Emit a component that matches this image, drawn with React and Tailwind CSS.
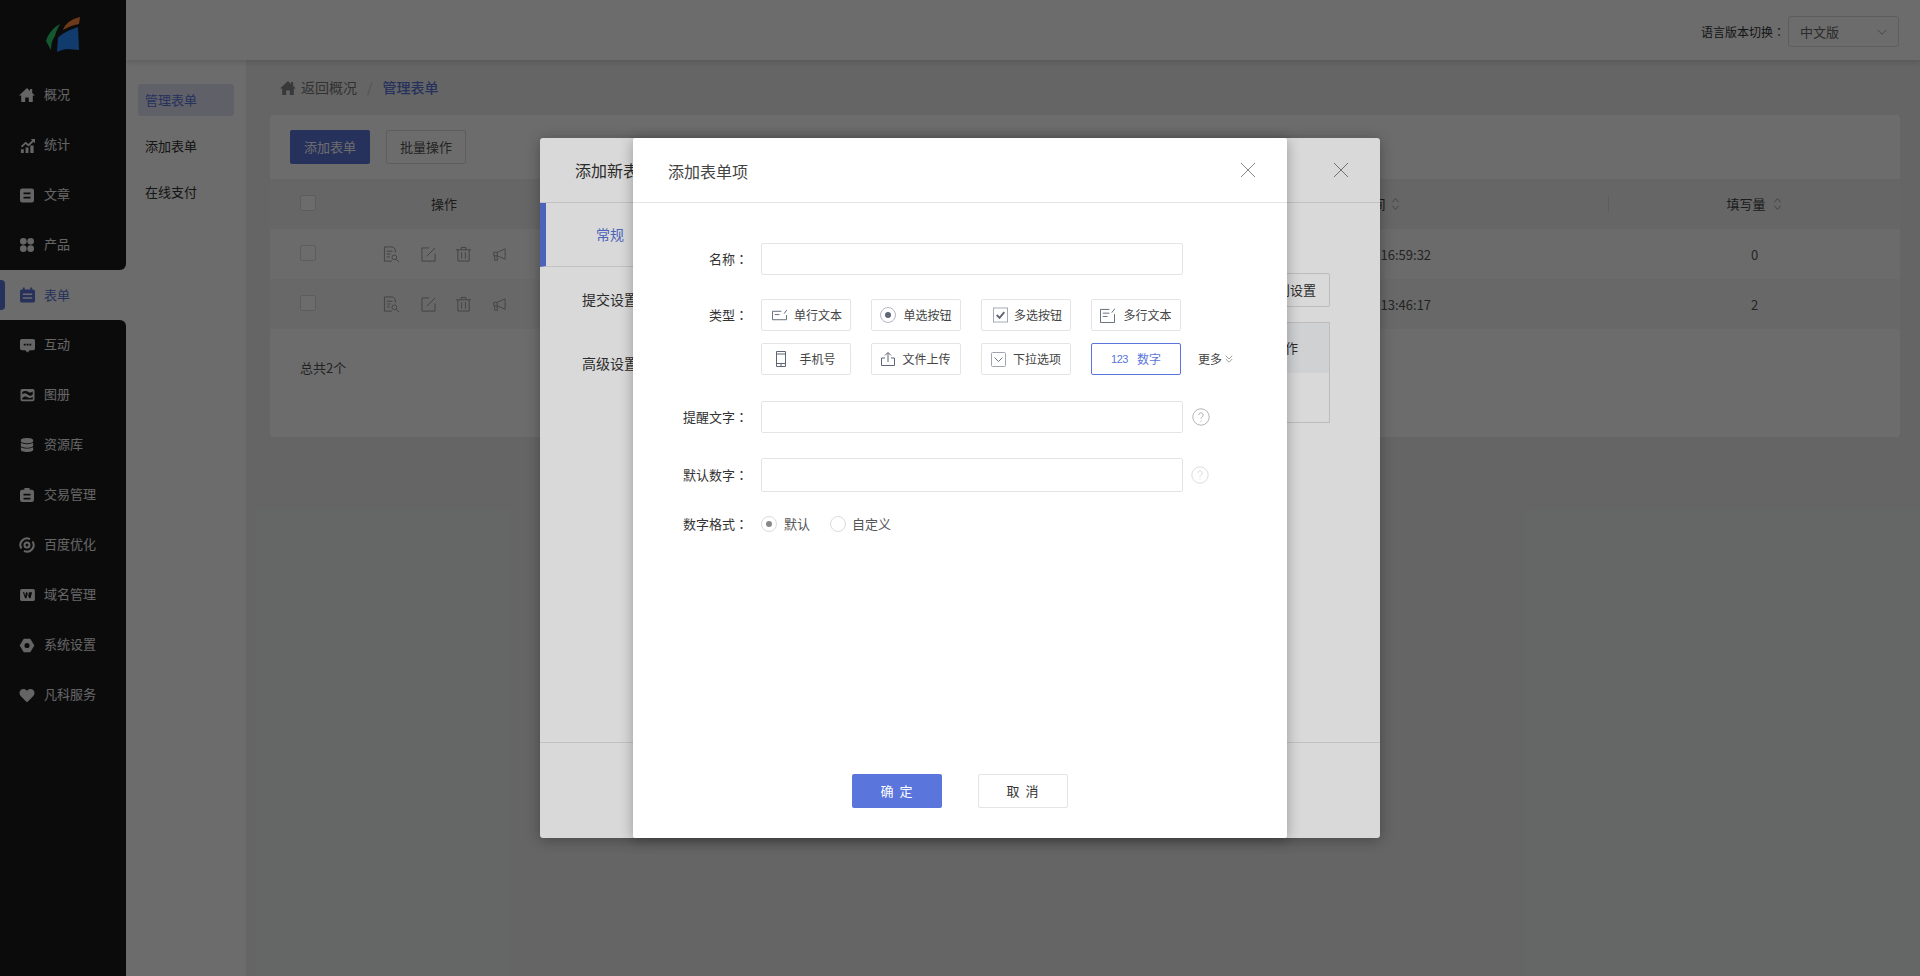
import React from 'react'
import { FaDatabase, FaHeart } from 'react-icons/fa'

const font = { fontFamily: '"Noto Sans CJK SC", "Liberation Sans", sans-serif' }

const Svg = ({ className, children, box = '0 0 16 16' }) => (
    <svg viewBox={box} className={className} fill="currentColor">{children}</svg>
)

const Line = ({ className, children, box = '0 0 16 16' }) => (
    <svg viewBox={box} className={className} fill="none" stroke="currentColor" strokeWidth="1">{children}</svg>
)

const HomeIcon = ({ className }) => (
    <Svg className={className}>
        <path d="M8 1 0 8.500h2.200V15h4v-4.500h3.600V15h4V8.500H16L13.200 5.900V2h-2.200v1.900Z" />
    </Svg>
)

const navTop = [
    { label: '概况', icon: <HomeIcon className="w-[16px] h-[16px]" /> },
    {
        label: '统计', icon: (
            <Svg className="w-[15px] h-[15px]">
                <path d="M1 12h3v4H1zM6 10h3v6H6zM11 8h3.500v8H11z" />
                <path d="M1 8.500 6 4l3 2.500L13 2.500l-1.500-1.500H16v4.500l-1.500-1.500-5.400 5L6 6.500 2.200 10z" />
            </Svg>
        )
    },
    {
        label: '文章', icon: (
            <Svg className="w-[14px] h-[15px]">
                <path fillRule="evenodd" d="M2.500 0h11A2.500 2.500 0 0 1 16 2.500v11a2.500 2.500 0 0 1-2.500 2.500h-11A2.500 2.500 0 0 1 0 13.500v-11A2.500 2.500 0 0 1 2.500 0ZM4 4.500V6.500h8V4.500ZM4 9.500v2h8v-2Z" />
            </Svg>
        )
    },
    {
        label: '产品', icon: (
            <Svg className="w-[14px] h-[14px]">
                <circle cx="3.800" cy="3.800" r="3.800" />
                <circle cx="12.200" cy="3.800" r="3.800" />
                <circle cx="3.800" cy="12.200" r="3.800" />
                <circle cx="12.200" cy="12.200" r="3.800" />
            </Svg>
        )
    },
]

const formIcon = (
    <Svg className="w-[15px] h-[16px]">
        <path fillRule="evenodd" d="M3 0h2v2h6V0h2v2h1a2 2 0 0 1 2 2v10a2 2 0 0 1-2 2H2a2 2 0 0 1-2-2V4a2 2 0 0 1 2-2h1Zm0 6.500v1.500h10V6.500Zm0 4v1.500h10v-1.500Z" />
    </Svg>
)

const navBottom = [
    {
        label: '互动', icon: (
            <Svg className="w-[15px] h-[15px]">
                <path fillRule="evenodd" d="M2 1h12a2 2 0 0 1 2 2v8a2 2 0 0 1-2 2h-3.500L8 15.500 5.500 13H2a2 2 0 0 1-2-2V3a2 2 0 0 1 2-2Zm2 5v2h2V6Zm3 0v2h2V6Zm3 0v2h2V6Z" />
            </Svg>
        )
    },
    {
        label: '图册', icon: (
            <Svg className="w-[15px] h-[14px]">
                <path fillRule="evenodd" d="M2 1h12a2 2 0 0 1 2 2v10a2 2 0 0 1-2 2H2a2 2 0 0 1-2-2V3a2 2 0 0 1 2-2Zm0 6.500c3-3 5-1 7 .5s3 1 5-.5V4c-2 1.500-3.500 1.500-5 .5S4 3 2 4.500Zm0 4V13h12v-3c-2 1.500-4 2-6 .5s-4-1-6 1Z" />
            </Svg>
        )
    },
    { label: '资源库', icon: <FaDatabase className="w-[14px] h-[14px]" /> },
    {
        label: '交易管理', icon: (
            <Svg className="w-[14px] h-[16px]">
                <path fillRule="evenodd" d="M5 0h6v2h2.500A2.500 2.500 0 0 1 16 4.500v9a2.500 2.500 0 0 1-2.500 2.500h-11A2.500 2.500 0 0 1 0 13.500v-9A2.500 2.500 0 0 1 2.500 2H5Zm-1 6.500V8.500h8V6.500Zm0 4.500v2h8v-2Z" />
            </Svg>
        )
    },
    {
        label: '百度优化', icon: (
            <Line className="w-[16px] h-[16px]">
                <path strokeWidth="2" d="M2.500 11.500A6.500 6.500 0 0 1 11 2.200M13.500 4.500a6.500 6.500 0 0 1-8.500 9.300" />
                <circle cx="8" cy="8" r="2.500" strokeWidth="2" />
            </Line>
        )
    },
    {
        label: '域名管理', icon: (
            <Svg className="w-[15px] h-[12px]" box="0 0 16 13">
                <rect width="16" height="13" rx="2" />
                <path fill="#1c1d1f" d="M3 3.500h1.500l.9 4 1-4h1.300l1 4 .9-4H13l-1.700 6.500H9.800L8 5.800 7 10H5.300Z" />
            </Svg>
        )
    },
    {
        label: '系统设置', icon: (
            <svg viewBox="0 0 16 16" className="w-[16px] h-[15px]" fill="currentColor" stroke="currentColor" strokeWidth="1.500" strokeLinejoin="round">
                <path fillRule="evenodd" d="M5 1.500h6L15 8l-4 6.500H5L1 8ZM8 4.500a3.500 3.500 0 1 0 0 7 3.500 3.500 0 0 0 0-7Z" />
            </svg>
        )
    },
    { label: '凡科服务', icon: <FaHeart className="w-[16px] h-[15px]" /> },
]

const NavItem = ({ item }) => (
    <div className="h-[50px] flex items-center text-[#eeeeee] text-[13px]">
        <span className="w-[44px] flex justify-center pl-[10px]">{item.icon}</span>
        <span className="-mt-[2px]">{item.label}</span>
    </div>
)

const Sidebar = () => (
    <aside className="w-[126px] shrink-0 h-full flex flex-col bg-white">
        <div className="bg-[#1c1d1f] rounded-br-md">
            <div className="h-[70px] flex justify-center items-start pt-[10px]">
                <svg viewBox="0 0 54 50" className="w-[54px] h-[50px]">
                    <path fill="#30d070" d="M24 14C17 18 12 24 10 31l5 9c0-6 1-10 4-14 1-5 3-8 5-12Z" />
                    <path fill="#ff8a3c" d="M27 20c2-6 8-11 17-13l-1 7c-6 1-11 3-16 6Z" />
                    <path fill="#2a8cff" d="M21 42l1-14c3-4 11-8 20-11l1 23c-4 0-8-1-11-1s-7 1-11 3Z" />
                </svg>
            </div>
            <div className="pt-0">
                {navTop.map(item => <NavItem key={item.label} item={item} />)}
            </div>
        </div>
        <div className="relative h-[50px] flex items-center text-[#5a75db] text-[13px]">
            <span className="absolute left-0 top-[10px] w-[5px] h-[30px] bg-[#5a75db] rounded-r-[4px]" />
            <span className="w-[44px] flex justify-center pl-[10px]">{formIcon}</span>
            <span>表单</span>
        </div>
        <div className="flex-1 bg-[#1c1d1f] rounded-tr-md">
            {navBottom.map(item => <NavItem key={item.label} item={item} />)}
        </div>
    </aside>
)

const SubNav = () => (
    <div className="w-[120px] shrink-0 bg-white px-[12px] pt-[24px] flex flex-col gap-[14px] text-[13px] text-[#333333]">
        <div className="h-[32px] rounded-[3px] bg-[#e3e7f6] text-[#5a75db] flex items-center pl-[7px]">管理表单</div>
        <div className="h-[32px] flex items-center pl-[7px] pb-[1px]">添加表单</div>
        <div className="h-[32px] flex items-center pl-[7px]">在线支付</div>
    </div>
)

const Topbar = () => (
    <header className="h-[60px] shrink-0 bg-white flex items-center justify-end pr-[21px] pt-[3px] shadow-[0_2px_6px_rgba(0,0,0,0.15)] relative z-10">
        <span className="text-[12px] text-[#333333] mr-[3px]">语言版本切换<Colon /></span>
        <div className="w-[111px] h-[31px] border border-[#dddddd] rounded-[3px] flex items-center justify-between pl-[11px] pr-[10px] text-[13px] text-[#666666]">
            <span>中文版</span>
            <Line className="w-[12px] h-[12px] text-[#888888]"><path d="M2 5l6 6 6-6" /></Line>
        </div>
    </header>
)

// the colon sits in the middle of its box in the picture, as in the TC cut
const Colon = () => <span className="[font-family:'Noto_Sans_CJK_TC',sans-serif]">：</span>

const Check = () => <span className="block w-[16px] h-[16px] border border-[#dddddd] rounded-[2px] bg-white -mt-[2px]" />

const SortIcon = () => (
    <Line box="0 0 10 16" className="w-[9px] h-[16px] text-[#999999]">
        <path d="M1.500 6 5 2l3.500 4M1.500 10 5 14l3.500-4" />
    </Line>
)

const rowIcons = (
    <div className="flex items-center text-[#999999]">
        <Line box="0 0 18 18" className="w-[17px] h-[17px] mr-[21px]">
            <path d="M13 7V3.500L10.500 1H1.500v15h8M4 5.500h6M4 8.500h4M4 11.500h3" />
            <circle cx="12" cy="12" r="2.500" />
            <path d="M14 14l3 3" />
        </Line>
        <Line className="w-[15px] h-[15px] mr-[20px]">
            <path d="M8.500 1H1v14h14V7M15 1 6 10" />
        </Line>
        <Line className="w-[15px] h-[16px] mr-[21px]">
            <path d="M0 3.500h16M5.500 3.500V1h5v2.500M2 3.500V15.500h12v-12M6 6v7M10 6v7" />
        </Line>
        <Line className="w-[14px] h-[15px]">
            <path d="M15 1.500v12L6 9.500H2V5.500H6ZM6 5.500v4M3 9.500V14.500h3.500l-1-5" />
        </Line>
    </div>
)

const Row = ({ bg, time, count }) => (
    <div className={`grid grid-cols-[70px_208px_577px_484px_1fr] h-[50px] items-center text-[13px] text-[#555555] ${bg}`}>
        <div className="pl-[30px]"><Check /></div>
        <div className="flex justify-center">{rowIcons}</div>
        <div />
        <div className="text-center pl-[8px] pt-[2px]">{time}</div>
        <div className="text-center pt-[2px]">{count}</div>
    </div>
)

const Page = () => (
    <div className="flex-1 min-w-0 flex flex-col bg-[#eeeff1]">
        <Topbar />
        <div className="flex-1 flex min-h-0">
            <SubNav />
            <main className="flex-1 min-w-0 pl-[24px] pr-[20px]">
                <div className="h-[55px] flex items-center pl-[10px] text-[14px]">
                    <HomeIcon className="w-[16px] h-[16px] text-[#888888] mr-[5px]" />
                    <span className="text-[#777777]">返回概况</span>
                    <span className="text-[#c0c4cc] mx-[10px]">/</span>
                    <span className="text-[#5a75db] font-medium">管理表单</span>
                </div>
                <div className="bg-white rounded-[4px] h-[322px]">
                    <div className="h-[64px] flex items-center pl-[20px] gap-[16px] text-[13px]">
                        <div className="w-[80px] h-[34px] bg-[#5a75db] text-white rounded-[2px] flex items-center justify-center">添加表单</div>
                        <div className="w-[80px] h-[34px] border border-[#dddddd] text-[#555555] rounded-[2px] flex items-center justify-center">批量操作</div>
                    </div>
                    <div className="grid grid-cols-[70px_208px_577px_484px_1fr] h-[50px] items-center bg-[#f1f1f2] text-[13px] text-[#444444]">
                        <div className="pl-[30px]"><Check /></div>
                        <div className="text-center">操作</div>
                        <div className="text-center">表单名称</div>
                        <div className="h-[16px] border-r border-[#dddddd] flex items-center justify-center gap-[5px]">创建时间 <SortIcon /></div>
                        <div className="flex items-center justify-center gap-[7px] pr-[1px]">填写量 <SortIcon /></div>
                    </div>
                    <Row bg="bg-[#fdfdfd]" time="2021-06-29 16:59:32" count="0" />
                    <Row bg="bg-[#f7f7f7]" time="2021-06-28 13:46:17" count="2" />
                    <div className="pl-[30px] pt-[29px] text-[13px] text-[#555555]">总共2个</div>
                </div>
            </main>
        </div>
    </div>
)

const AddFormModal = () => (
    <div className="w-[840px] h-[700px] bg-white rounded-[3px] shadow-[0_2px_14px_rgba(0,0,0,0.3)] flex flex-col text-[#333333]">
        <div className="h-[64px] shrink-0 border-b border-[#e4e4e7] flex items-center justify-between pl-[35px] pr-[31px] box-content">
            <span className="text-[16px]">添加新表单</span>
            <Line className="w-[16px] h-[16px] text-[#666666]"><path strokeWidth="0.8" d="M1 1l14 14M15 1 1 15" /></Line>
        </div>
        <div className="h-[540px] shrink-0 border-b border-[#e4e4e7] flex">
            <div className="w-[140px] shrink-0 text-[14px]">
                <div className="h-[64px] border-l-[6px] border-l-[#5a75db] border-b border-b-[#e4e4e7] flex items-center justify-center text-[#5a75db] pr-[6px]">常规</div>
                <div className="h-[64px] flex items-center justify-center">提交设置</div>
                <div className="h-[65px] flex items-center justify-center">高级设置</div>
            </div>
            <div className="flex-1 flex flex-col items-end pr-[50px] pt-[70px]">
                <div className="w-[80px] h-[34px] border border-[#dddddd] rounded-[2px] flex items-center justify-center text-[13px]">规则设置</div>
                <div className="mt-[15px] w-full h-[101px] border border-[#dddddd]">
                    <div className="h-[50px] bg-[#f5f6f8] flex items-center justify-end pr-[31px] text-[13px]">操作</div>
                </div>
            </div>
        </div>
    </div>
)

const TypeBtn = ({ icon, text, active }) => (
    <div className={`w-[90px] h-[32px] border rounded-[2px] flex items-center justify-center text-[12px] ${active ? 'border-[#5a75db] text-[#5a75db]' : 'border-[#e4e4e7] text-[#444444]'}`}>
        {icon}
        <span>{text}</span>
    </div>
)

const typeRowOne = [
    {
        text: '单行文本', icon: (
            <Line className="w-[15px] h-[15px] ml-[2px] mr-[7px] text-[#5c6675]">
                <path d="M10 3.500H.5v9h15V7.500M3 7h5M13 6l2.800-4" />
            </Line>
        )
    },
    {
        text: '单选按钮', icon: (
            <svg viewBox="0 0 16 16" className="w-[16px] h-[16px] mr-[7px]">
                <circle cx="8" cy="8" r="7.500" fill="none" stroke="#b4b8c2" />
                <circle cx="8" cy="8" r="3" fill="#5c6675" />
            </svg>
        )
    },
    {
        text: '多选按钮', icon: (
            <svg viewBox="0 0 16 16" className="w-[15px] h-[16px] ml-[3px] mr-[6px]">
                <rect x=".5" y=".5" width="15" height="15" fill="none" stroke="#a0a5b0" />
                <path d="M4 8l3 3 5-6" fill="none" stroke="#5c6675" strokeWidth="2" />
            </svg>
        )
    },
    {
        text: '多行文本', icon: (
            <Line className="w-[15px] h-[15px] mr-[8px] text-[#5c6675]">
                <path d="M10 1.500H.5v14h15V6.500M3 5.500h7M3 9h5M16 .5l-3.500 4.500" />
            </Line>
        )
    },
]

const typeRowTwo = [
    {
        text: '手机号', icon: (
            <Line box="0 0 10 16" className="w-[10px] h-[16px] mr-[13px] text-[#5c6675]">
                <path d="M.5.500h9v15h-9zM.5 3h9M.5 12.500h9M4 14h2" />
            </Line>
        )
    },
    {
        text: '文件上传', icon: (
            <Line box="0 0 14 14" className="w-[14px] h-[14px] mr-[7px] text-[#5c6675]">
                <path d="M4 6H.5v7.500h13V6H10M7 10V.8M4 3.500 7 .5l3 3" />
            </Line>
        )
    },
    {
        text: '下拉选项', icon: (
            <svg viewBox="0 0 15 15" className="w-[15px] h-[15px] mr-[7px]" fill="none">
                <rect x=".5" y=".5" width="14" height="14" rx="1" stroke="#a0a5b0" />
                <path d="M3.500 5.500 7.500 9.500l4-4" stroke="#6d7582" />
            </svg>
        )
    },
    {
        text: '数字', active: true, icon: (
            <span className="text-[11px] font-light tracking-[-0.5px] mr-[9px] [font-family:'Liberation_Sans',sans-serif]">123</span>
        )
    },
]

const Field = ({ label, className, inputClass, help }) => (
    <div className={`flex items-center ${className}`}>
        <label className="w-[115px] text-right text-[13px] text-[#333333] mr-[13px]">{label}<Colon /></label>
        <div className={`w-[422px] border border-[#e4e4e7] rounded-[2px] ${inputClass}`} />
        {help}
    </div>
)

const Help = ({ className, ml }) => (
    <svg viewBox="0 0 18 18" className={`w-[18px] h-[18px] ${ml} ${className}`} fill="none">
        <circle cx="9" cy="9" r="8.200" stroke="currentColor" />
        <path d="M6.800 7a2.200 2.200 0 1 1 3.400 1.900C9.300 9.500 9 10 9 11M9 12.500v1.200" stroke="currentColor" />
    </svg>
)

const AddItemModal = () => (
    <div className="w-[654px] h-[700px] bg-white rounded-[2px] shadow-[0_2px_14px_rgba(0,0,0,0.3)] flex flex-col">
        <div className="h-[64px] shrink-0 border-b border-[#e4e4e7] box-content flex items-center justify-between pl-[35px] pr-[31px]">
            <span className="text-[16px] text-[#444444] pt-[2px]">添加表单项</span>
            <Line className="w-[16px] h-[16px] text-[#666666]"><path strokeWidth="0.8" d="M1 1l14 14M15 1 1 15" /></Line>
        </div>
        <div className="flex-1 flex flex-col pt-[40px]">
            <Field label="名称" inputClass="h-[32px]" />
            <div className="flex mt-[24px]">
                <label className="w-[115px] mr-[13px] h-[32px] flex items-center justify-end text-[13px] text-[#333333]">类型<Colon /></label>
                <div className="flex flex-col gap-[12px]">
                    <div className="flex gap-[20px]">
                        {typeRowOne.map(t => <TypeBtn key={t.text} {...t} />)}
                    </div>
                    <div className="flex gap-[20px] relative">
                        {typeRowTwo.map(t => <TypeBtn key={t.text} {...t} />)}
                        <div className="flex items-center text-[12px] text-[#444444] -ml-[3px]">
                            更多
                            <Line box="0 0 10 10" className="w-[8px] h-[8px] ml-[3px] text-[#888888]">
                                <path d="M1 1l4 4 4-4M1 5l4 4 4-4" />
                            </Line>
                        </div>
                    </div>
                </div>
            </div>
            <Field label="提醒文字" className="mt-[26px]" inputClass="h-[32px]" help={<Help className="text-[#b5b5b5]" ml="ml-[9px]" />} />
            <Field label="默认数字" className="mt-[25px]" inputClass="h-[34px]" help={<Help className="text-[#dddddd]" ml="ml-[8px]" />} />
            <div className="flex items-center mt-[22px] text-[13px] text-[#333333]">
                <label className="w-[115px] text-right mr-[13px]">数字格式<Colon /></label>
                <span className="w-[16px] h-[16px] rounded-full border border-[#dcdcdc] flex items-center justify-center mr-[7px]">
                    <span className="w-[6px] h-[6px] rounded-full bg-[#888888]" />
                </span>
                <span className="mr-[20px] text-[#555555]">默认</span>
                <span className="w-[16px] h-[16px] rounded-full border border-[#dcdcdc] mr-[6px]" />
                <span className="text-[#555555]">自定义</span>
            </div>
        </div>
        <div className="h-[64px] shrink-0 flex justify-center gap-[36px] pr-[1px] text-[13px]">
            <div className="w-[90px] h-[34px] bg-[#5a75db] text-white rounded-[2px] flex items-center justify-center tracking-[6px] pl-[6px]">确定</div>
            <div className="w-[90px] h-[34px] border border-[#e4e4e7] text-[#333333] rounded-[2px] flex items-center justify-center tracking-[6px] pl-[6px]">取消</div>
        </div>
    </div>
)

const App = () => (
    <div className="w-[1920px] h-[976px] overflow-hidden relative flex" style={font}>
        <Sidebar />
        <Page />
        <div className="absolute inset-0 bg-black/50 flex justify-center pt-[138px] z-20">
            <AddFormModal />
        </div>
        <div className="absolute inset-0 bg-black/15 flex justify-center pt-[138px] z-30">
            <AddItemModal />
        </div>
    </div>
)

export default App
